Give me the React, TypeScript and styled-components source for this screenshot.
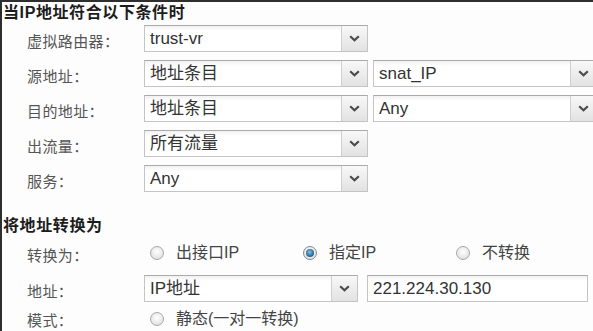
import styled, { createGlobalStyle } from 'styled-components';

const GlobalStyle = createGlobalStyle`
    html, body {
        margin: 0;
        padding: 0;
        background: #fff;
    }
    body {
        font-family: "Liberation Sans", "Noto Sans CJK SC", sans-serif;
    }
`;

const Page = styled.div`
    width: 593px;
    height: 331px;
    box-sizing: border-box;
    overflow: hidden;
    background: #fdfdfd;
    border-top: 2px solid #2e2e2e;
    border-left: 2px solid #2e2e2e;
`;

const SectionTitle = styled.h3<{ $top: number }>`
    margin: ${p => p.$top}px 0 0 1px;
    height: 22px;
    line-height: 22px;
    font-size: 16px;
    font-weight: bold;
    letter-spacing: 0.6px;
    color: #1c1c1c;
    font-family: "Liberation Sans", "Noto Sans CJK SC", sans-serif;
`;

const Form = styled.div<{ $gap: number; $top: number }>`
    display: grid;
    grid-template-columns: 117px auto;
    row-gap: ${p => p.$gap}px;
    padding-left: 25px;
    margin-top: ${p => p.$top}px;
`;

const Label = styled.div<{ $h?: number }>`
    height: ${p => p.$h ?? 27}px;
    display: flex;
    align-items: center;
    padding-top: ${p => (p.$h && p.$h < 20 ? 0 : 3)}px;
    box-sizing: border-box;
    font-size: 15px;
    letter-spacing: 0.4px;
    color: #555;
    font-family: "Noto Sans CJK SC", sans-serif;
`;

const Fields = styled.div<{ $gap?: number }>`
    display: flex;
    align-items: center;
    gap: ${p => p.$gap ?? 5}px;
    white-space: nowrap;
`;

const SelectBox = styled.div<{ $w: number }>`
    width: ${p => p.$w}px;
    height: 27px;
    flex: none;
    box-sizing: border-box;
    display: flex;
    border: 1px solid #c4c4c4;
    border-top-color: #aaa;
    background: linear-gradient(#f1f1f1, #fff 5px);
`;

const SelectText = styled.div`
    flex: 1;
    padding-left: 5px;
    line-height: 25px;
    font-size: 17px;
    color: #333;
    overflow: hidden;
`;

const ArrowButton = styled.div`
    width: 25px;
    flex: none;
    display: flex;
    align-items: center;
    justify-content: center;
    border-left: 1px solid #cfcfcf;
    background: linear-gradient(#f8f8f8, #e2e2e2);
`;

const TextInput = styled.div<{ $w: number }>`
    width: ${p => p.$w}px;
    height: 27px;
    flex: none;
    box-sizing: border-box;
    border: 1px solid #c4c4c4;
    border-top-color: #aaa;
    background: linear-gradient(#f3f3f3, #fff 5px);
    padding-left: 5px;
    line-height: 25px;
    font-size: 17px;
    color: #333;
`;

const RadioGroup = styled.div`
    display: flex;
    align-items: center;
    white-space: nowrap;
`;

const RadioOption = styled.label`
    width: 147px;
    height: 16px;
    flex: none;
    display: flex;
    align-items: center;
    gap: 12px;
    margin-left: 6px;
    font-size: 16px;
    line-height: 16px;
    color: #444;
    font-family: "Liberation Sans", "Noto Sans CJK SC", sans-serif;
`;

const RadioDot = styled.span<{ $checked?: boolean }>`
    width: 14px;
    height: 14px;
    flex: none;
    box-sizing: border-box;
    border-radius: 50%;
    border: 1px solid ${p => (p.$checked ? '#7d8a92' : '#a9a9a9')};
    background: radial-gradient(circle at 50% 40%, #fff, #d8d8d8);
    display: flex;
    align-items: center;
    justify-content: center;

    &::after {
        content: '';
        display: ${p => (p.$checked ? 'block' : 'none')};
        width: 8px;
        height: 8px;
        border-radius: 50%;
        background: radial-gradient(circle at 45% 40%, #7fc2e6, #1f5f86 70%);
    }
`;

function Chevron() {
    return (
        <svg width="11" height="7" viewBox="0 0 11 7">
            <path d="M1.2 1.2 L5.5 5.2 L9.8 1.2" fill="none" stroke="#4a4a4a" strokeWidth="2.2" />
        </svg>
    );
}

function Select({ value, width = 224 }: { value: string; width?: number }) {
    return (
        <SelectBox $w={width}>
            <SelectText>{value}</SelectText>
            <ArrowButton>
                <Chevron />
            </ArrowButton>
        </SelectBox>
    );
}

function Radio({ text, checked }: { text: string; checked?: boolean }) {
    return (
        <RadioOption>
            <RadioDot $checked={checked} />
            {text}
        </RadioOption>
    );
}

export default function App() {
    return (
        <>
            <GlobalStyle />
            <Page>
                <SectionTitle $top={0}>当IP地址符合以下条件时</SectionTitle>
                <Form $gap={8} $top={1}>
                    <Label>虚拟路由器：</Label>
                    <Fields>
                        <Select value='trust-vr' />
                    </Fields>

                    <Label>源地址：</Label>
                    <Fields>
                        <Select value='地址条目' />
                        <Select value='snat_IP' />
                    </Fields>

                    <Label>目的地址：</Label>
                    <Fields>
                        <Select value='地址条目' />
                        <Select value='Any' />
                    </Fields>

                    <Label>出流量：</Label>
                    <Fields>
                        <Select value='所有流量' />
                    </Fields>

                    <Label>服务：</Label>
                    <Fields>
                        <Select value='Any' />
                    </Fields>
                </Form>

                <SectionTitle $top={23}>将地址转换为</SectionTitle>
                <Form $gap={9} $top={2}>
                    <Label>转换为：</Label>
                    <RadioGroup>
                        <Radio text='出接口IP' />
                        <Radio text='指定IP' checked />
                        <Radio text='不转换' />
                    </RadioGroup>

                    <Label>地址：</Label>
                    <Fields $gap={9}>
                        <Select value='IP地址' width={214} />
                        <TextInput $w={221}>221.224.30.130</TextInput>
                    </Fields>

                    <Label $h={16}>模式：</Label>
                    <RadioGroup>
                        <Radio text='静态(一对一转换)' />
                    </RadioGroup>
                </Form>
            </Page>
        </>
    );
}
